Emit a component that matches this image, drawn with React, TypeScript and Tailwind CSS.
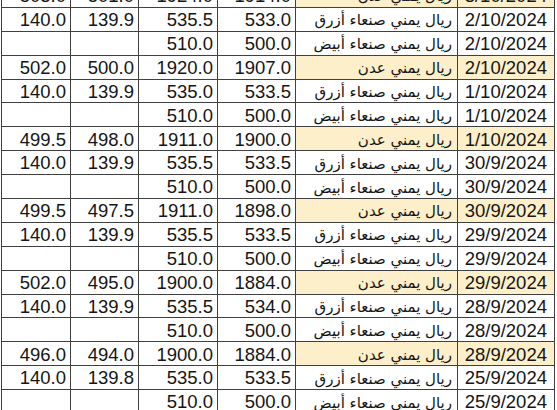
type Row = {
  sell: string;
  buy: string;
  hi: string;
  lo: string;
  kind: "aden" | "azraq" | "abyad";
  date: string;
};

const names: Record<Row["kind"], string> = {
  aden: "ريال يمني عدن",
  azraq: "ريال يمني صنعاء أزرق",
  abyad: "ريال يمني صنعاء أبيض",
};

const rows: Row[] = [
  { sell: "503.0", buy: "501.0", hi: "1924.0", lo: "1914.0", kind: "aden", date: "3/10/2024" },
  { sell: "140.0", buy: "139.9", hi: "535.5", lo: "533.0", kind: "azraq", date: "2/10/2024" },
  { sell: "", buy: "", hi: "510.0", lo: "500.0", kind: "abyad", date: "2/10/2024" },
  { sell: "502.0", buy: "500.0", hi: "1920.0", lo: "1907.0", kind: "aden", date: "2/10/2024" },
  { sell: "140.0", buy: "139.9", hi: "535.0", lo: "533.5", kind: "azraq", date: "1/10/2024" },
  { sell: "", buy: "", hi: "510.0", lo: "500.0", kind: "abyad", date: "1/10/2024" },
  { sell: "499.5", buy: "498.0", hi: "1911.0", lo: "1900.0", kind: "aden", date: "1/10/2024" },
  { sell: "140.0", buy: "139.9", hi: "535.5", lo: "533.5", kind: "azraq", date: "30/9/2024" },
  { sell: "", buy: "", hi: "510.0", lo: "500.0", kind: "abyad", date: "30/9/2024" },
  { sell: "499.5", buy: "497.5", hi: "1911.0", lo: "1898.0", kind: "aden", date: "30/9/2024" },
  { sell: "140.0", buy: "139.9", hi: "535.5", lo: "533.5", kind: "azraq", date: "29/9/2024" },
  { sell: "", buy: "", hi: "510.0", lo: "500.0", kind: "abyad", date: "29/9/2024" },
  { sell: "502.0", buy: "495.0", hi: "1900.0", lo: "1884.0", kind: "aden", date: "29/9/2024" },
  { sell: "140.0", buy: "139.9", hi: "535.5", lo: "534.0", kind: "azraq", date: "28/9/2024" },
  { sell: "", buy: "", hi: "510.0", lo: "500.0", kind: "abyad", date: "28/9/2024" },
  { sell: "496.0", buy: "494.0", hi: "1900.0", lo: "1884.0", kind: "aden", date: "28/9/2024" },
  { sell: "140.0", buy: "139.8", hi: "535.0", lo: "533.5", kind: "azraq", date: "25/9/2024" },
  { sell: "", buy: "", hi: "510.0", lo: "500.0", kind: "abyad", date: "25/9/2024" },
];

const num = "border border-[#404040] text-right pr-[4px] pt-[2px] align-middle";

export default function App() {
  return (
    <div className="w-[557px] h-[410px] overflow-hidden bg-white pl-[1px]">
      <table
        className="-mt-[17px] table-fixed border-collapse text-[18.5px] leading-none text-[#151515]"
        style={{ fontFamily: '"Liberation Sans", Arial, sans-serif' }}
      >
        <colgroup>
          <col className="w-[69px]" />
          <col className="w-[68px]" />
          <col className="w-[79px]" />
          <col className="w-[78px]" />
          <col className="w-[162px]" />
          <col className="w-[97px]" />
        </colgroup>
        <tbody>
          {rows.map((r, i) => {
            const hl = r.kind === "aden" ? "bg-[#fcefc9]" : "bg-white";
            return (
              <tr key={i} className="h-[23.9px]">
                <td className={num}>{r.sell}</td>
                <td className={num}>{r.buy}</td>
                <td className={num}>{r.hi}</td>
                <td className={num}>{r.lo}</td>
                <td
                  dir="rtl"
                  className={`border border-[#404040] text-right pr-[5px] pt-[3px] text-[15px] ${hl}`}
                  style={{ fontFamily: '"DejaVu Sans", "Noto Sans", sans-serif' }}
                >
                  {names[r.kind]}
                </td>
                <td className={`${num} pr-[7px] ${hl}`}>{r.date}</td>
              </tr>
            );
          })}
        </tbody>
      </table>
    </div>
  );
}
